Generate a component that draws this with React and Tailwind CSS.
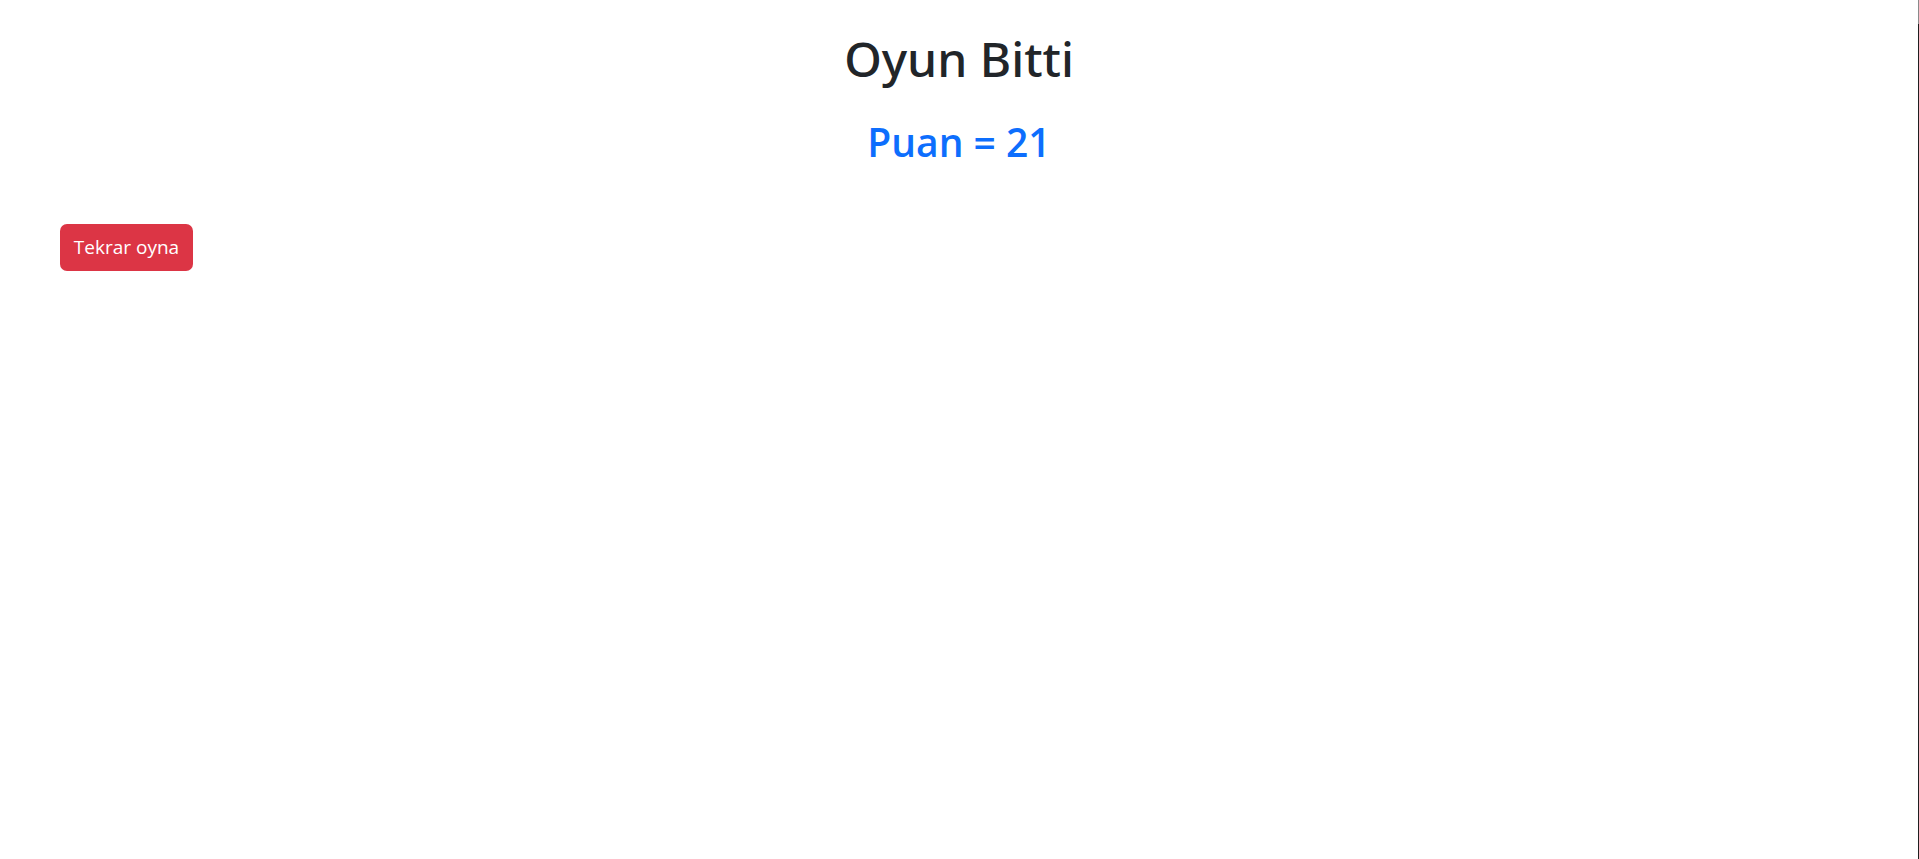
export default function App() {
  return (
    <div className="flex h-screen w-full bg-white" style={{ fontFamily: '"Open Sans", "Noto Sans", sans-serif' }}>
      <div className="flex-1 flex flex-col">
        <h1 className="pt-[29px] text-center text-[48px] leading-[60px] font-medium text-[#212529]" style={{ fontFamily: '"Noto Sans", "Open Sans", sans-serif' }}>Oyun Bitti</h1>
        <h2 className="mt-[29px] text-center text-[39px] leading-[48px] font-semibold text-[#0d6efd]">Puan = 21</h2>
        <div className="mt-[58px] pl-[60px]">
          <button className="flex h-[47px] w-[133px] items-center justify-center rounded-[7px] bg-[#dc3545] text-[19px] text-white">
            Tekrar oyna
          </button>
        </div>
      </div>
      <div className="flex w-px flex-col">
        <div className="h-[24px] bg-[#8a8a8a]" />
        <div className="flex-1 bg-[#1f1f1f]" />
      </div>
    </div>
  );
}
